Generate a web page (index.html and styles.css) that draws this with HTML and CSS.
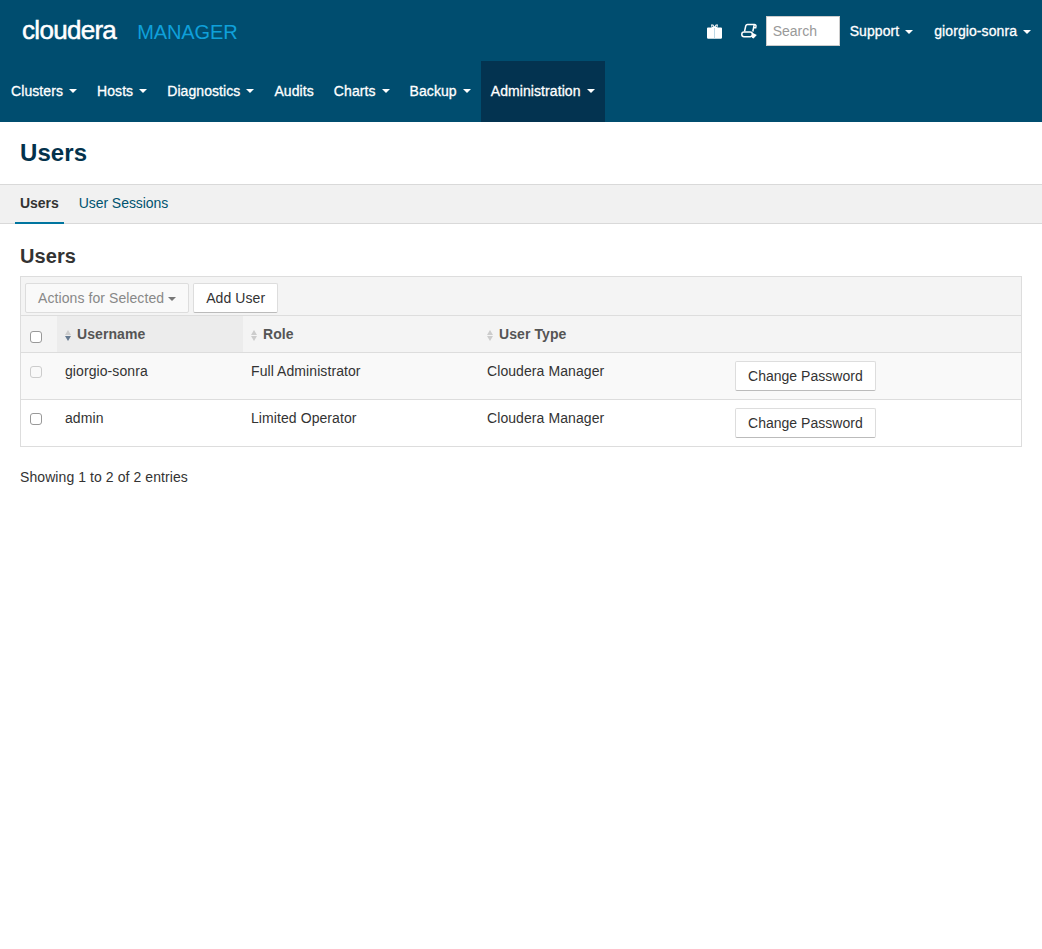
FILE: index.html
```html
<!DOCTYPE html>
<html lang="en">
<head>
  <meta charset="UTF-8">
  <title>Users</title>
  <link rel="stylesheet" href="styles.css">
</head>
<body>
  <header class="header">
    <div class="topbar">
      <a class="brand"><span class="brand-name">cloudera</span><span class="brand-product">MANAGER</span></a>
      <div class="topbar-right">
        <svg class="top-icon gift" width="15" height="16" viewBox="0 0 15 16">
          <path d="M4 1.500h2.200L7.500 3.500 8.800 1.500H11l-.6 3H14a1 1 0 0 1 1 1v9a1.200 1.200 0 0 1-1.200 1.200H1.200A1.200 1.200 0 0 1 0 14.500v-9a1 1 0 0 1 1-1h3.600z" fill="#fff"/>
          <path d="M5.200 2.600h.5l.6 1.300h-.9zM9.300 2.600h.5l-.2 1.300h-.9z" fill="#004d6f"/>
          <path d="M7.500 5v10.700" stroke="#bcd8e6" stroke-width="1"/>
        </svg>
        <svg class="top-icon scroll" width="16" height="16" viewBox="0 0 16 16">
          <path d="M3.500 8.500L4.800 2.800A1.800 1.800 0 0 1 6.500 1.500h7a1.500 1.500 0 0 1 1.500 1.700L14.700 4.800H12.500M13.200 1.800L11.800 8.500" fill="none" stroke="#fff" stroke-width="1.500"/>
          <rect x="0.800" y="9" width="10.500" height="4.800" rx="2.200" fill="none" stroke="#fff" stroke-width="1.500"/>
          <path d="M11 9.500l4.800 2.500-3.300 3.500-1.500-.8z" fill="#fff"/>
        </svg>
        <input class="search" type="text" placeholder="Search">
        <a class="top-link">Support<span class="caret"></span></a>
        <a class="top-link">giorgio-sonra<span class="caret"></span></a>
      </div>
    </div>
    <nav class="mainnav">
      <a class="nav-item">Clusters<span class="caret"></span></a>
      <a class="nav-item">Hosts<span class="caret"></span></a>
      <a class="nav-item">Diagnostics<span class="caret"></span></a>
      <a class="nav-item">Audits</a>
      <a class="nav-item">Charts<span class="caret"></span></a>
      <a class="nav-item">Backup<span class="caret"></span></a>
      <a class="nav-item active">Administration<span class="caret"></span></a>
    </nav>
  </header>

  <div class="page-title"><h1>Users</h1></div>

  <div class="tabs">
    <a class="tab current">Users</a>
    <a class="tab">User Sessions</a>
  </div>

  <main class="content">
    <h2>Users</h2>
    <div class="users-box">
      <div class="toolbar">
        <button class="btn disabled">Actions for Selected<span class="caret dark"></span></button>
        <button class="btn">Add User</button>
      </div>
      <table class="users">
        <thead>
          <tr>
            <th class="col-check"><input type="checkbox"></th>
            <th class="col-name sorted"><span class="sort on"></span>Username</th>
            <th class="col-role"><span class="sort"></span>Role</th>
            <th class="col-type"><span class="sort"></span>User Type</th>
            <th></th>
          </tr>
        </thead>
        <tbody>
          <tr class="odd">
            <td class="col-check"><input type="checkbox" disabled></td>
            <td>giorgio-sonra</td>
            <td>Full Administrator</td>
            <td>Cloudera Manager</td>
            <td class="col-action"><button class="btn">Change Password</button></td>
          </tr>
          <tr>
            <td class="col-check"><input type="checkbox"></td>
            <td>admin</td>
            <td>Limited Operator</td>
            <td>Cloudera Manager</td>
            <td class="col-action"><button class="btn">Change Password</button></td>
          </tr>
        </tbody>
      </table>
    </div>
    <p class="entries">Showing 1 to 2 of 2 entries</p>
  </main>
</body>
</html>
```
FILE: styles.css
```css
* {
  box-sizing: border-box;
}
body {
  margin: 0;
  min-height: 949px;
  background: #fff;
  color: #333;
  font-family: "Liberation Sans", Arial, sans-serif;
  font-size: 14px;
  line-height: 20px;
  letter-spacing: 0.08px;
}
.header {
  background: #004d6f;
  height: 122px;
  color: #fff;
}
.topbar {
  display: flex;
  justify-content: space-between;
  align-items: center;
  height: 61px;
  padding: 0 11px 0 22px;
}
.brand {
  display: flex;
  align-items: baseline;
}
.brand-name {
  font-size: 26px;
  letter-spacing: -0.7px;
  color: #fff;
  -webkit-text-stroke: 0.5px #fff;
}
.brand-product {
  margin-left: 21px;
  font-size: 20px;
  letter-spacing: -0.1px;
  color: #0fa0da;
}
.topbar-right {
  display: flex;
  align-items: center;
}
.top-icon {
  display: block;
}
.gift {
  margin-right: 19px;
}
.scroll {
  margin-right: 9px;
}
.search {
  width: 74px;
  height: 30px;
  padding: 0 6px;
  border: 1px solid #ccc;
  background: #fff;
  font-family: inherit;
  font-size: 14px;
}
.search::placeholder {
  color: #999;
}
.top-link {
  margin-left: 10px;
  color: #fff;
  -webkit-text-stroke: 0.3px #fff;
}
.top-link + .top-link {
  margin-left: 21px;
}
.caret {
  display: inline-block;
  margin-left: 6px;
  vertical-align: middle;
  border-top: 4px solid #fff;
  border-left: 4px solid transparent;
  border-right: 4px solid transparent;
}
.caret.dark {
  margin-left: 4px;
  border-top-color: #777;
}
.mainnav {
  display: flex;
  height: 61px;
  padding-left: 1px;
}
.nav-item {
  display: flex;
  align-items: center;
  padding: 0 10px 2px;
  color: #fff;
  -webkit-text-stroke: 0.3px #fff;
}
.nav-item .caret {
  margin-left: 6px;
}
.nav-item.active {
  background: #033350;
}
.page-title {
  height: 62px;
  padding: 0 20px;
  display: flex;
  align-items: center;
}
h1 {
  margin: 0;
  color: #03324c;
  font-size: 24px;
  font-weight: bold;
}
.tabs {
  display: flex;
  height: 40px;
  padding-left: 15px;
  background: #f1f1f1;
  border-top: 1px solid #d9d9d9;
  border-bottom: 1px solid #d9d9d9;
}
.tab {
  height: 39px;
  padding: 8px 5px 0;
  margin-right: 10px;
  color: #00536f;
  letter-spacing: -0.05px;
}
.tab.current {
  color: #333;
  font-weight: bold;
  border-bottom: 2px solid #00759f;
}
.content {
  padding: 0 20px;
}
h2 {
  margin: 0;
  padding: 20px 0 8px;
  height: 52px;
  font-size: 20px;
  line-height: 24px;
  color: #333;
}
.users-box {
  border: 1px solid #ddd;
}
.toolbar {
  display: flex;
  gap: 4px;
  height: 38px;
  padding: 6px 0 0 4px;
  background: #f4f4f4;
}
.btn {
  height: 30px;
  padding: 0 12px;
  border: 1px solid #ddd;
  border-bottom-color: #bbb;
  border-radius: 2px;
  background: #fff;
  color: #333;
  font-family: inherit;
  font-size: 14px;
  letter-spacing: inherit;
}
.btn.disabled {
  background: #f9f9f9;
  color: #888;
  border-color: #ddd;
}
.users {
  width: 100%;
  border-collapse: collapse;
  table-layout: fixed;
}
.users th {
  height: 37px;
  padding: 0 8px;
  background: #f4f4f4;
  color: #555;
  text-align: left;
  font-size: 14px;
  border-top: 1px solid #ddd;
  border-bottom: 1px solid #ddd;
}
.users th.sorted {
  background: #ececec;
}
.users td {
  height: 47px;
  padding: 8px 8px 0;
  vertical-align: top;
  border-bottom: 1px solid #ddd;
}
.users tr:last-child td {
  height: 46px;
  border-bottom: 0;
}
.users .odd td {
  background: #f9f9f9;
}
.col-action .btn {
  letter-spacing: 0.02px;
}
.col-check {
  width: 36px;
}
.col-name {
  width: 186px;
}
.col-role {
  width: 236px;
}
.col-type {
  width: 248px;
}
input[type="checkbox"] {
  width: 12px;
  height: 12px;
  margin: 0 0 0 1px;
  vertical-align: middle;
  appearance: none;
  border: 1px solid #999;
  border-radius: 3px;
  background: #fff;
}
input[type="checkbox"]:disabled {
  border-color: #ccc;
  background: #f9f9f9;
}
.users th input[type="checkbox"] {
  margin-top: 3px;
}
.sort {
  display: inline-block;
  position: relative;
  width: 6px;
  height: 11px;
  margin-right: 6px;
  vertical-align: -2px;
}
.sort::before,
.sort::after {
  content: "";
  position: absolute;
  left: 0;
  border-left: 3px solid transparent;
  border-right: 3px solid transparent;
}
.sort::before {
  top: 0;
  border-bottom: 5px solid #ccc;
}
.sort::after {
  bottom: 0;
  border-top: 5px solid #ccc;
}
.sort.on::after {
  border-top-color: #667a90;
}
.entries {
  margin: 20px 0 0;
}
```
